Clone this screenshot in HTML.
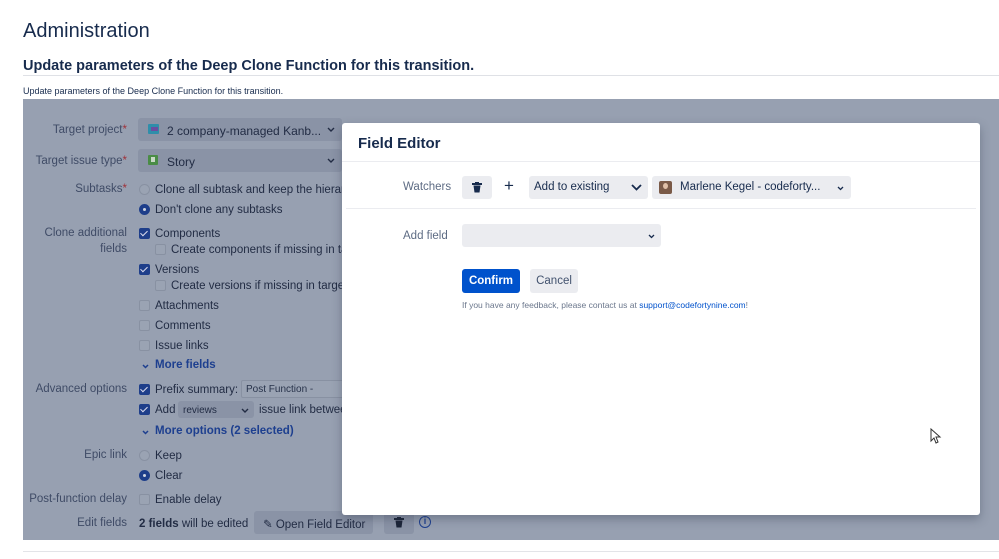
<!DOCTYPE html>
<html><head><meta charset="utf-8"><style>
*{margin:0;padding:0;box-sizing:border-box}
body{width:999px;height:559px;overflow:hidden;background:#fff;font-family:"Liberation Sans","DejaVu Sans",sans-serif;color:#172b4d;position:relative}
.a{position:absolute;white-space:nowrap}
.ov{position:absolute;left:23px;top:99px;width:976px;height:441px;background:#97a0b1}
.lbl{position:absolute;right:872px;font-size:11.5px;color:#3f4b66;text-align:right}
.t{position:absolute;font-size:11.5px;color:#222c44;margin-top:1px}
.sel{position:absolute;background:#8a93a6;border-radius:3px}
.cb{position:absolute;width:11px;height:11px;border-radius:2px;border:1.5px solid #8891a2;background:#9aa3b3}
.cb.on{background:#1e3e8a;border-color:#1e3e8a}
.cb.on:after{content:"";position:absolute;left:2px;top:0px;width:3px;height:6px;border:solid #dde;border-width:0 1.5px 1.5px 0;transform:rotate(45deg)}
.rd{position:absolute;width:11px;height:11px;border-radius:50%;border:1.5px solid #8891a2;background:#9aa3b3}
.rd.on{background:#1e3e8a;border-color:#1e3e8a}
.rd.on:after{content:"";position:absolute;left:2.5px;top:2.5px;width:3px;height:3px;border-radius:50%;background:#cfd4df}
.lnk{position:absolute;font-size:11.5px;font-weight:bold;color:#1d3f8f}
.req{color:#a0323a}
.m{position:absolute;left:342px;top:123px;width:638px;height:392px;background:#fff;border-radius:3px;box-shadow:0 4px 10px rgba(40,50,70,.35)}
.gb{position:absolute;background:#ebecf0;border-radius:3px}
</style></head><body>
<div class="a" style="left:23px;top:20px;font-size:20px;color:#172b4d">Administration</div>
<div class="a" style="left:23px;top:58px;font-size:14.5px;font-weight:bold;color:#172b4d">Update parameters of the Deep Clone Function for this transition.</div>
<div class="a" style="left:23px;top:75px;width:976px;height:1px;background:#dfe1e6"></div>
<div class="a" style="left:23px;top:86px;font-size:9px;color:#172b4d">Update parameters of the Deep Clone Function for this transition.</div>
<div class="a" style="left:23px;top:551px;width:976px;height:1px;background:#e3e4e8"></div>

<div class="ov">
<div class="lbl" style="top:25px">Target project<span class="req">*</span></div>
<div class="sel" style="left:115px;top:19px;width:204px;height:23px"></div>
<div class="a" style="left:125px;top:25px;width:11px;height:10px;background:#2f8eaa;border-radius:1px"><div style="position:absolute;left:3px;top:3px;width:7px;height:4px;background:#6b4ea0"></div></div>
<div class="t" style="left:144px;top:24px;font-size:12px">2 company-managed Kanb...</div>
<svg class="a" style="left:304px;top:28px" width="8" height="5" viewBox="0 0 8 5"><path d="M1 1l3 3 3-3" stroke="#222c44" stroke-width="1.4" fill="none"/></svg>
<div class="lbl" style="top:56px">Target issue type<span class="req">*</span></div>
<div class="sel" style="left:115px;top:50px;width:204px;height:23px"></div>
<div class="a" style="left:125px;top:56px;width:10px;height:10px;background:#4a8c46;border-radius:1px"><div style="position:absolute;left:3px;top:2px;width:4px;height:5px;background:#c8d8c6"></div></div>
<div class="t" style="left:144px;top:55px;font-size:12px">Story</div>
<svg class="a" style="left:304px;top:59px" width="8" height="5" viewBox="0 0 8 5"><path d="M1 1l3 3 3-3" stroke="#222c44" stroke-width="1.4" fill="none"/></svg>
<div class="lbl" style="top:84px">Subtasks<span class="req">*</span></div>
<div class="rd" style="left:116px;top:85px"></div><div class="t" style="left:132px;top:84px">Clone all subtask and keep the hierarchy</div>
<div class="rd on" style="left:116px;top:105px"></div><div class="t" style="left:132px;top:104px">Don't clone any subtasks</div>
<div class="lbl" style="top:128px">Clone additional</div>
<div class="lbl" style="top:144px">fields</div>
<div class="cb on" style="left:116px;top:129px"></div><div class="t" style="left:132px;top:128px">Components</div>
<div class="cb" style="left:132px;top:145px"></div><div class="t" style="left:148px;top:144px">Create components if missing in target</div>
<div class="cb on" style="left:116px;top:165px"></div><div class="t" style="left:132px;top:164px">Versions</div>
<div class="cb" style="left:132px;top:181px"></div><div class="t" style="left:148px;top:180px">Create versions if missing in target</div>
<div class="cb" style="left:116px;top:201px"></div><div class="t" style="left:132px;top:200px">Attachments</div>
<div class="cb" style="left:116px;top:221px"></div><div class="t" style="left:132px;top:220px">Comments</div>
<div class="cb" style="left:116px;top:241px"></div><div class="t" style="left:132px;top:240px">Issue links</div>
<svg class="a" style="left:119px;top:265px" width="7" height="5" viewBox="0 0 7 5"><path d="M1 1l2.5 2.5L6 1" stroke="#1d3f8f" stroke-width="1.5" fill="none"/></svg><div class="lnk" style="left:132px;top:260px">More fields</div>
<div class="lbl" style="top:284px">Advanced options</div>
<div class="cb on" style="left:116px;top:285px"></div><div class="t" style="left:132px;top:284px">Prefix summary:</div>
<div class="a" style="left:218px;top:281px;width:120px;height:18px;border:1px solid #8891a2;background:#9aa3b3;border-radius:2px;font-size:10px;color:#27324a;padding:3px 4px">Post Function -</div>
<div class="cb on" style="left:116px;top:305px"></div><div class="t" style="left:132px;top:304px">Add</div>
<div class="sel" style="left:155px;top:302px;width:76px;height:17px"></div>
<div class="t" style="left:160px;top:305px;font-size:10px">reviews</div>
<svg class="a" style="left:218px;top:309px" width="8" height="5" viewBox="0 0 8 5"><path d="M1 1l3 3 3-3" stroke="#222c44" stroke-width="1.4" fill="none"/></svg>
<div class="t" style="left:236px;top:304px">issue link between</div>
<svg class="a" style="left:119px;top:331px" width="7" height="5" viewBox="0 0 7 5"><path d="M1 1l2.5 2.5L6 1" stroke="#1d3f8f" stroke-width="1.5" fill="none"/></svg><div class="lnk" style="left:132px;top:326px">More options (2 selected)</div>
<div class="lbl" style="top:350px">Epic link</div>
<div class="rd" style="left:116px;top:351px"></div><div class="t" style="left:132px;top:350px">Keep</div>
<div class="rd on" style="left:116px;top:371px"></div><div class="t" style="left:132px;top:370px">Clear</div>
<div class="lbl" style="top:394px">Post-function delay</div>
<div class="cb" style="left:116px;top:395px"></div><div class="t" style="left:132px;top:394px">Enable delay</div>
<div class="lbl" style="top:418px">Edit fields</div>
<div class="t" style="left:116px;top:418px"><b>2 fields</b> will be edited</div>
<div class="sel" style="left:231px;top:412px;width:119px;height:23px"></div>
<div class="t" style="left:240px;top:417px">✎ Open Field Editor</div>
<div class="sel" style="left:361px;top:412px;width:30px;height:23px"></div>
<svg class="a" style="left:371px;top:418px" width="10" height="11" viewBox="0 0 10 11"><rect x="0" y="1" width="10" height="2" fill="#1b2438"/><rect x="3" y="0" width="4" height="2" fill="#1b2438"/><path d="M1.5 3.5h7l-1 7h-5z" fill="#1b2438"/></svg>
<div class="a" style="left:396px;top:417px;width:12px;height:12px;border:1.5px solid #1d3f8f;border-radius:50%;font-size:9px;color:#1d3f8f;text-align:center;line-height:9px;font-weight:bold">i</div>
</div>

<div class="m">
<div class="a" style="left:16px;top:12px;font-size:15px;font-weight:bold;color:#172b4d">Field Editor</div>
<div class="a" style="left:0;top:38px;width:638px;height:1px;background:#ebecf0"></div>
<div class="a" style="left:61px;top:58px;font-size:11.5px;color:#5e6c84">Watchers</div>
<div class="gb" style="left:120px;top:53px;width:30px;height:23px"></div>
<svg class="a" style="left:130px;top:59px" width="10" height="11" viewBox="0 0 10 11"><rect x="0" y="1" width="10" height="2" fill="#172b4d"/><rect x="3" y="0" width="4" height="2" fill="#172b4d"/><path d="M1.5 3.5h7l-1 7h-5z" fill="#172b4d"/></svg>
<div class="a" style="left:162px;top:53px;font-size:17px;color:#172b4d">+</div>
<div class="gb" style="left:187px;top:53px;width:119px;height:23px"></div>
<div class="a" style="left:192px;top:58px;font-size:11.5px;color:#172b4d">Add to existing</div>
<svg class="a" style="left:289px;top:61px" width="11" height="7" viewBox="0 0 11 7"><path d="M1 1l4.5 4.5L10 1" stroke="#172b4d" stroke-width="1.8" fill="none"/></svg>
<div class="gb" style="left:310px;top:53px;width:199px;height:23px"></div>
<div class="a" style="left:317px;top:58px;width:13px;height:13px;background:#7a5a48;border-radius:2px"><div style="position:absolute;left:4px;top:2px;width:5px;height:6px;background:#e0c0a8;border-radius:50%"></div></div>
<div class="a" style="left:338px;top:58px;font-size:11.5px;color:#172b4d">Marlene Kegel - codeforty...</div>
<svg class="a" style="left:495px;top:63px" width="7" height="5" viewBox="0 0 7 5"><path d="M1 1l2.5 2.5L6 1" stroke="#172b4d" stroke-width="1.3" fill="none"/></svg>
<div class="a" style="left:4px;top:85px;width:630px;height:1px;background:#ebecf0"></div>
<div class="a" style="left:61px;top:107px;font-size:11.5px;color:#5e6c84">Add field</div>
<div class="gb" style="left:120px;top:101px;width:199px;height:23px"></div>
<svg class="a" style="left:306px;top:111px" width="7" height="5" viewBox="0 0 7 5"><path d="M1 1l2.5 2.5L6 1" stroke="#172b4d" stroke-width="1.3" fill="none"/></svg>
<div class="a" style="left:120px;top:146px;width:58px;height:24px;background:#0052cc;border-radius:3px;color:#fff;font-size:11.5px;font-weight:bold;text-align:center;line-height:25px">Confirm</div>
<div class="gb" style="left:188px;top:146px;width:48px;height:24px;font-size:11.5px;color:#42526e;text-align:center;line-height:25px">Cancel</div>
<div class="a" style="left:120px;top:177px;font-size:8.5px;color:#6b778c">If you have any feedback, please contact us at <span style="color:#0052cc">support@codefortynine.com</span>!</div>
<svg class="a" style="left:588px;top:305px" width="12" height="16" viewBox="0 0 12 16"><path d="M1 1v12l3-3 2 5 2-1-2-5h4z" fill="#fff" stroke="#333" stroke-width="1"/></svg>
</div>
</body></html>
